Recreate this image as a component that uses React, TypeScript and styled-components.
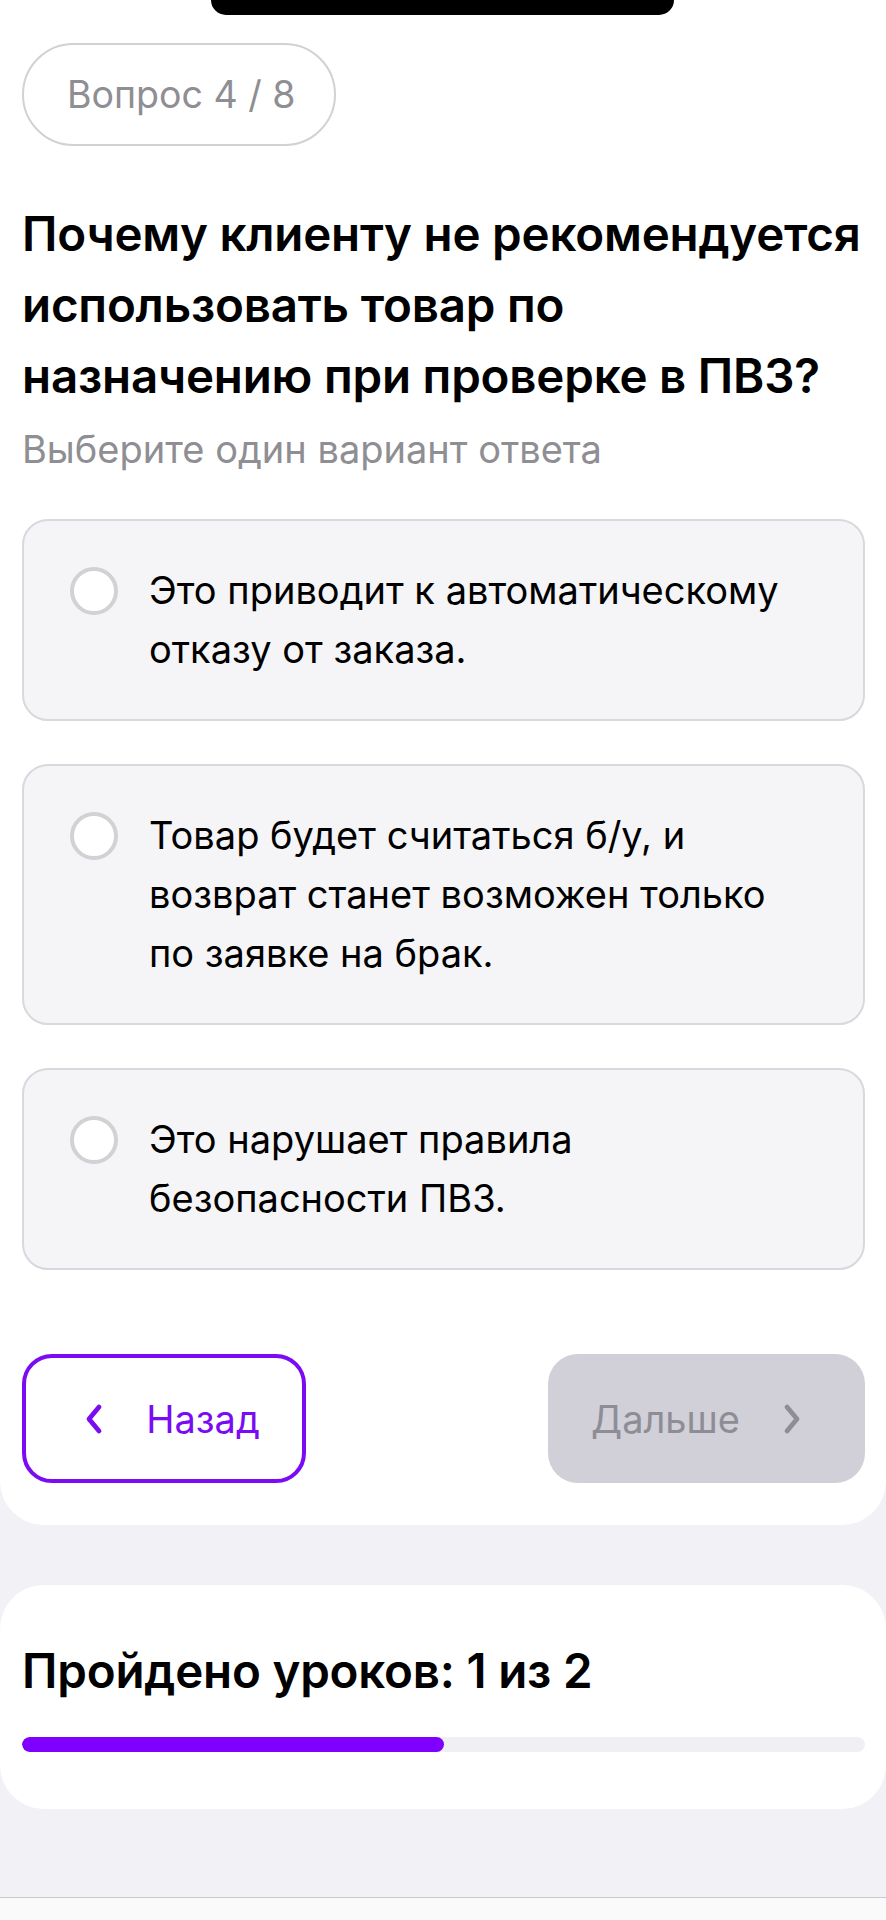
import styled, { createGlobalStyle } from "styled-components";

const GlobalStyle = createGlobalStyle`
  body {
    margin: 0;
    background: #f2f2f6;
    font-family: Inter, "Noto Sans", "Liberation Sans", sans-serif;
    color: #000;
  }
`;

const options = [
  "Это приводит к автоматическому отказу от заказа.",
  "Товар будет считаться б/у, и возврат станет возможен только по заявке на брак.",
  "Это нарушает правила безопасности ПВЗ.",
];

const Chevron = ({ dir }: { dir: "left" | "right" }) => (
  <svg width="20" height="32" viewBox="0 0 20 32" fill="none">
    <path
      d={dir === "left" ? "M15 4 L5 16 L15 28" : "M5 4 L15 16 L5 28"}
      stroke="currentColor"
      strokeWidth="4.8"
      strokeLinecap="round"
      strokeLinejoin="round"
    />
  </svg>
);

const App = () => {
  const done = 1;
  const total = 2;

  return (
    <Page>
      <GlobalStyle />
      <QuizSection>
        <Notch />
        <StepPill>Вопрос 4 / 8</StepPill>
        <Question>
          Почему клиенту не рекомендуется
          <br />
          использовать товар по
          <br />
          назначению при проверке в ПВЗ?
        </Question>
        <Hint>Выберите один вариант ответа</Hint>
        <OptionList>
          {options.map((text) => (
            <OptionCard key={text}>
              <Radio />
              <OptionText>{text}</OptionText>
            </OptionCard>
          ))}
        </OptionList>
        <NavRow>
          <NavButton $variant="back">
            <Chevron dir="left" />
            <span>Назад</span>
          </NavButton>
          <NavButton $variant="next" disabled>
            <span>Дальше</span>
            <Chevron dir="right" />
          </NavButton>
        </NavRow>
      </QuizSection>

      <ProgressCard>
        <ProgressTitle>
          Пройдено уроков: {done} из {total}
        </ProgressTitle>
        <Track>
          <Fill style={{ width: `${(done / total) * 100}%` }} />
        </Track>
      </ProgressCard>

      <TabBar />
    </Page>
  );
};

const Page = styled.div`
  display: flex;
  flex-direction: column;
  min-height: 1920px;
  overflow: hidden;
`;

const QuizSection = styled.section`
  display: flex;
  flex-direction: column;
  align-items: flex-start;
  background: #fff;
  border-radius: 0 0 44px 44px;
  padding: 0 21px 42px 22px;
`;

const Notch = styled.div`
  align-self: center;
  width: 463px;
  height: 15px;
  margin-left: -3px;
  background: #000;
  border-radius: 0 0 30px 30px;
`;

const StepPill = styled.div`
  display: inline-flex;
  align-items: center;
  box-sizing: border-box;
  height: 103px;
  margin-top: 28px;
  padding: 0 38px 0 43px;
  border: 2px solid #d1d1d6;
  border-radius: 52px;
  font-size: 37.5px;
  color: #8e8e93;
`;

const Question = styled.h1`
  margin: 52px -16px 0 0;
  font-size: 47.5px;
  line-height: 71px;
  font-weight: 600;
  letter-spacing: -0.2px;
  white-space: nowrap;
`;

const Hint = styled.p`
  margin: 10px 0 0;
  font-size: 38px;
  line-height: 56px;
  color: #8e8e93;
`;

const OptionList = styled.div`
  display: flex;
  flex-direction: column;
  gap: 43px;
  align-self: stretch;
  margin-top: 42px;
`;

const OptionCard = styled.div`
  display: flex;
  align-items: flex-start;
  gap: 31px;
  padding: 40px 40px 40px 46px;
  background: #f5f5f7;
  border: 2px solid #d8d8dd;
  border-radius: 26px;
`;

const Radio = styled.span`
  flex: none;
  box-sizing: border-box;
  width: 48px;
  height: 48px;
  margin-top: 6px;
  border: 4px solid #d1d1d6;
  border-radius: 50%;
  background: #fff;
`;

const OptionText = styled.div`
  font-size: 38px;
  line-height: 59px;
  padding-right: 30px;
`;

const NavRow = styled.div`
  display: flex;
  justify-content: space-between;
  align-self: stretch;
  margin-top: 84px;
`;

const NavButton = styled.button<{ $variant: "back" | "next" }>`
  display: flex;
  align-items: center;
  justify-content: center;
  gap: 42px;
  box-sizing: border-box;
  width: ${(p) => (p.$variant === "back" ? "284px" : "317px")};
  height: 129px;
  padding: ${(p) => (p.$variant === "back" ? "0 0 0 16px" : "0 20px 0 0")};
  font-family: inherit;
  font-size: 38px;
  border-radius: 30px;
  border: ${(p) => (p.$variant === "back" ? "4px solid #7a0bf2" : "none")};
  background: ${(p) => (p.$variant === "back" ? "#fff" : "#d1d0d8")};
  color: ${(p) => (p.$variant === "back" ? "#7a0bf2" : "#8e8d96")};
`;

const ProgressCard = styled.section`
  display: flex;
  flex-direction: column;
  margin-top: 60px;
  padding: 50px 21px 57px 22px;
  background: #fff;
  border-radius: 44px;
`;

const ProgressTitle = styled.h2`
  margin: 0;
  font-size: 47.5px;
  line-height: 71px;
  font-weight: 600;
  letter-spacing: -0.2px;
`;

const Track = styled.div`
  height: 15px;
  margin-top: 31px;
  background: #f0f0f4;
  border-radius: 8px;
  overflow: hidden;
`;

const Fill = styled.div`
  height: 100%;
  background: #7f00ff;
  border-radius: 8px;
`;

const TabBar = styled.div`
  margin-top: auto;
  height: 22px;
  border-top: 1px solid #c9c9cd;
  background: #fafafa;
`;

export default App;
